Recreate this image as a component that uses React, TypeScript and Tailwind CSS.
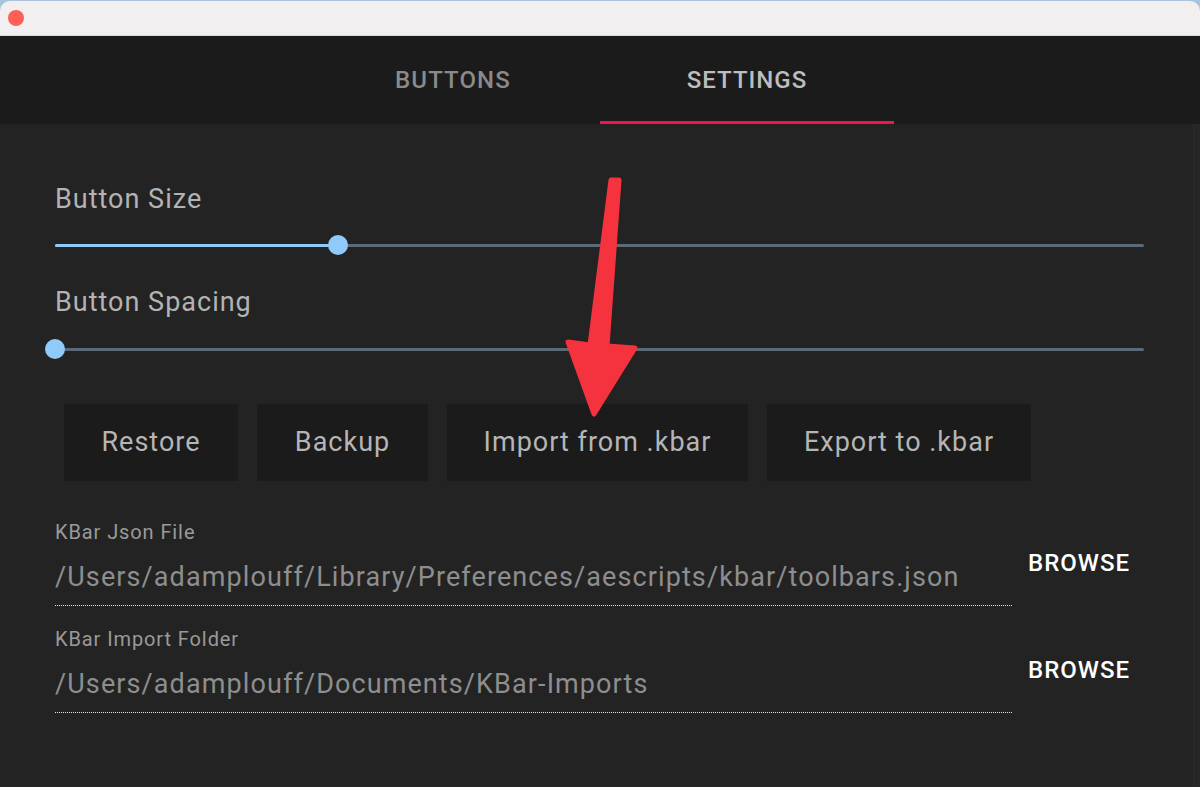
import { useState } from "react";

const font = { fontFamily: "Roboto, 'Liberation Sans', sans-serif" };

function Slider({ value }: { value: number }) {
  return (
    <div className="relative h-5 flex items-center">
      <div className="h-[3px] w-full bg-[#5b6a79] rounded-full" />
      <div
        className="absolute left-0 h-[3px] bg-[#90caf9] rounded-full"
        style={{ width: `${value}%` }}
      />
      <div
        className="absolute w-5 h-5 -ml-[10px] rounded-full bg-[#90caf9]"
        style={{ left: `${value}%` }}
      />
    </div>
  );
}

function PathField({ label, value, top }: { label: string; value: string; top: string }) {
  return (
    <div className={`flex items-center ${top}`}>
      <div className="w-[957px]">
        <div className="text-[20px] leading-6 tracking-[0.9px] text-[#9a9a9a]">{label}</div>
        <div className="mt-[17px] text-[27px] leading-8 tracking-[1.1px] text-[#8e8e8e] pb-[12px] border-b border-dotted border-[#e6e6e6] whitespace-nowrap">
          {value}
        </div>
      </div>
      <button className="ml-[16px] text-[24px] font-medium text-white tracking-[1px]">BROWSE</button>
    </div>
  );
}

export default function App() {
  const [tab] = useState("settings");
  const buttons = [
    { label: "Restore", w: "w-[174px]" },
    { label: "Backup", w: "w-[171px]" },
    { label: "Import from .kbar", w: "w-[301px]" },
    { label: "Export to .kbar", w: "w-[264px]" },
  ];

  return (
    <div className="w-[1200px] h-[787px] bg-[#a9c3dc] overflow-hidden relative" style={font}>
      <div className="mt-[1px] h-[786px] rounded-t-[10px] bg-[#f1efef] flex flex-col overflow-hidden">
        <div className="h-[35px] shrink-0 flex items-center px-[8px] border-b border-[#dcdcdc]">
          <div className="w-4 h-4 rounded-full bg-[#fe5f57]" />
        </div>

        <div className="h-[88px] shrink-0 bg-[#1b1b1b] flex justify-center">
          <div className="flex">
            <div className="w-[294px] flex items-center justify-center border-b-[3px] border-transparent">
              <span
                className={`text-[24px] font-medium tracking-[1.1px] pt-[3px] ${
                  tab === "buttons" ? "text-[#bdbdbd]" : "text-[#8a8a8a]"
                }`}
              >
                BUTTONS
              </span>
            </div>
            <div className="w-[294px] flex items-center justify-center border-b-[3px] border-[#f0154f]">
              <span className="text-[24px] font-medium tracking-[1px] text-[#bdbdbd] pt-[3px]">SETTINGS</span>
            </div>
          </div>
        </div>

        <div className="flex-1 bg-[#232323] flex">
          <div className="flex-1 pl-[55px] pr-[49px] pt-[59px]">
            <div className="text-[27px] leading-8 tracking-[1px] text-[#b3b3b3]">Button Size</div>
            <div className="mt-[20px]">
              <Slider value={26} />
            </div>
            <div className="mt-[31px] text-[27px] leading-8 tracking-[1px] text-[#b3b3b3]">Button Spacing</div>
            <div className="mt-[21px]">
              <Slider value={0} />
            </div>

            <div className="mt-[45px] ml-[9px] flex gap-[19px]">
              {buttons.map((b) => (
                <button
                  key={b.label}
                  className={`${b.w} h-[77px] bg-[#1b1b1b] text-[27px] tracking-[1px] text-[#b5b5b5] flex items-center justify-center`}
                >
                  {b.label}
                </button>
              ))}
            </div>

            <PathField
              top="mt-[39px]"
              label="KBar Json File"
              value="/Users/adamplouff/Library/Preferences/aescripts/kbar/toolbars.json"
            />
            <PathField
              top="mt-[21px]"
              label="KBar Import Folder"
              value="/Users/adamplouff/Documents/KBar-Imports"
            />
          </div>
          <div className="w-[7px] bg-[#262626] border-l border-[#2c2c2c]" />
        </div>
      </div>

      <svg className="absolute left-0 top-0 pointer-events-none" width="1200" height="787">
        <polygon
          points="611,180 619,180 607,346 635,348 594,414 568,342 590,345"
          fill="#f5333f"
          stroke="#f5333f"
          strokeWidth="5"
          strokeLinejoin="round"
        />
      </svg>
    </div>
  );
}
